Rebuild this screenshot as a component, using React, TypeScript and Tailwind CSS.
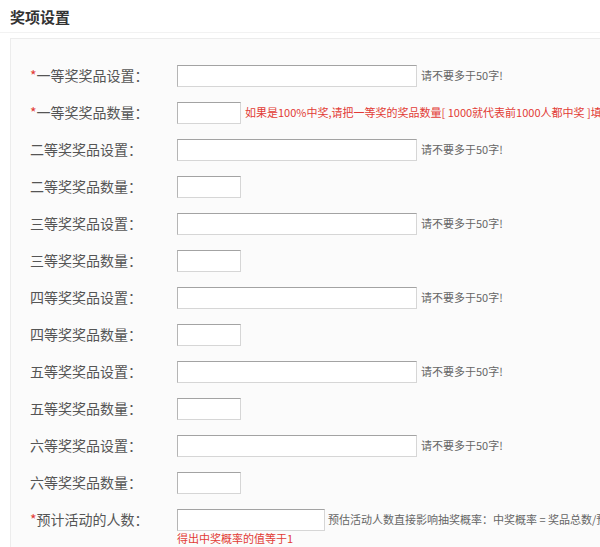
import React from "react";

const prizes = ["一", "二", "三", "四", "五", "六"];

function Field({ w }: { w: string }) {
  return (
    <input
      type="text"
      className={`${w} h-[22px] bg-white border border-[#d6d6d6] border-t-[#a3a3a3] border-l-[#b5b5b5] outline-none`}
    />
  );
}

function Row({
  label,
  required,
  children,
}: {
  label: string;
  required?: boolean;
  children: React.ReactNode;
}) {
  return (
    <div className="flex items-center h-[37px]">
      <div className="w-[166px] shrink-0 pl-[19px] text-[14px] text-[#555]">
        {required && <span className="text-[#e23b36]">*</span>}
        {label}：
      </div>
      {children}
    </div>
  );
}

export default function App() {
  return (
    <div
      className="w-[600px] h-[547px] overflow-hidden bg-white"
      style={{ fontFamily: '"Noto Sans CJK SC", "Microsoft YaHei", sans-serif' }}
    >
      <div className="h-[33px] pl-[10px] pt-[8px] text-[15px] font-bold text-[#333] leading-[18px] border-b border-[#f2f2f2]">
        奖项设置
      </div>
      <div className="mt-[5px] ml-[10px] w-[620px] border border-[#ececec] bg-[#fbfbfb] pt-[18px] pb-[20px]">
        {prizes.map((p, i) => (
          <React.Fragment key={p}>
            <Row label={`${p}等奖奖品设置`} required={i === 0}>
              <Field w="w-[240px]" />
              <span className="ml-[4px] text-[11px] text-[#666] whitespace-nowrap">
                请不要多于50字!
              </span>
            </Row>
            <Row label={`${p}等奖奖品数量`} required={i === 0}>
              <Field w="w-[64px]" />
              {i === 0 && (
                <span className="ml-[4px] text-[11px] text-[#e23b36] whitespace-nowrap">
                  如果是100%中奖,请把一等奖的奖品数量[ 1000就代表前1000人都中奖 ]填写
                </span>
              )}
            </Row>
          </React.Fragment>
        ))}
        <div className="flex">
          <div className="w-[166px] shrink-0 h-[37px] flex items-center pl-[19px] text-[14px] text-[#555]">
            <span className="text-[#e23b36]">*</span>预计活动的人数：
          </div>
          <div className="flex flex-col">
            <div className="flex items-center h-[37px]">
              <Field w="w-[148px]" />
              <span className="ml-[3px] text-[11px] text-[#666] whitespace-nowrap">
                预估活动人数直接影响抽奖概率：中奖概率 = 奖品总数/预估活动人数
              </span>
            </div>
            <div className="-mt-[6px] text-[11px] leading-[13px] text-[#e23b36]">
              得出中奖概率的值等于1
            </div>
          </div>
        </div>
      </div>
    </div>
  );
}
